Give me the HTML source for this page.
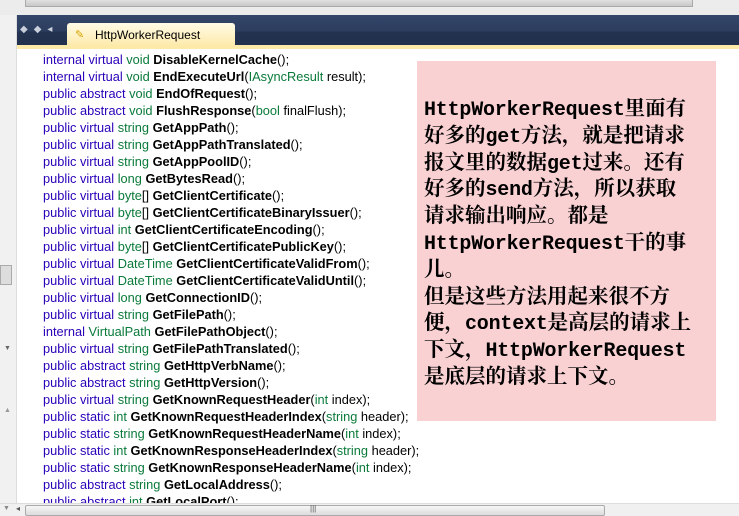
<!DOCTYPE html>
<html><head><meta charset="utf-8"><style>
*{margin:0;padding:0;box-sizing:border-box}
body{width:739px;height:516px;overflow:hidden;background:#fff;position:relative;font-family:"Liberation Sans",sans-serif}
.top{position:absolute;left:0;top:0;width:739px;height:15px;background:#ececec}
.topbar3{position:absolute;left:25px;top:0;width:668px;height:7px;background:linear-gradient(#e0e0e0,#c8c8c8);border:1px solid #aaa;border-top:none}
.hdr{position:absolute;left:17px;top:15px;width:722px;height:30px;background:linear-gradient(#34476a,#2c3d5e 55%,#23324f 56%,#22314d)}
.tab{position:absolute;left:67px;top:23px;width:168px;height:24px;background:linear-gradient(#fffbe6,#fde9a8);border-radius:3px 3px 0 0;font-size:12px;color:#000;padding:5px 0 0 28px}
.strip{position:absolute;left:17px;top:45px;width:722px;height:4px;background:#fde9a8}
.arrows{position:absolute;left:20px;top:24px;color:#c9d0dc;font-size:10px;letter-spacing:6px}
.left{position:absolute;left:0;top:15px;width:17px;height:490px;background:#f1f1f1;border-right:1px solid #ddd}
.code{position:absolute;left:43px;top:51px;font-size:12.8px;line-height:17px;white-space:pre;color:#000}
.k{color:#2a00b8}.t{color:#0a7a3a}b{font-weight:bold}
.hs{position:absolute;left:0;top:503px;width:739px;height:13px;background:#f0f0f0;border-top:1px solid #ddd}
.thumb{position:absolute;left:25px;top:505px;width:580px;height:11px;background:linear-gradient(#f6f6f6,#dcdcdc);border:1px solid #aaa;border-radius:2px}
.pink{position:absolute;left:417px;top:61px;width:299px;height:360px;background:#f9d1d3}
.pt{position:absolute;left:424px;top:93px;font-family:"Noto Serif CJK SC","Noto Sans CJK SC",serif;font-size:20.5px;color:#000;font-weight:bold;white-space:nowrap}
.pt div{height:26.8px;line-height:26.8px;overflow:visible}
.l{font-family:"Liberation Mono",monospace;font-size:20px;letter-spacing:-0.2px;line-height:1}
</style></head><body>
<div class="top"><div class="topbar3"></div></div>
<div class="left"><div style="position:absolute;left:0;top:250px;width:12px;height:20px;background:#ddd;border:1px solid #aaa"></div><div style="position:absolute;left:4px;top:330px;font-size:7px;color:#666">▼</div><div style="position:absolute;left:4px;top:392px;font-size:7px;color:#999">▲</div></div>
<div class="hdr"></div>
<div class="arrows">◆◆◂</div>
<div class="tab"><span style="position:absolute;left:8px;top:5px;color:#d8a400;font-size:11px">✎</span>HttpWorkerRequest</div>
<div class="strip"></div>
<div class="code"><span class="k">internal virtual</span> <span class="t">void</span> <b>DisableKernelCache</b>();
<span class="k">internal virtual</span> <span class="t">void</span> <b>EndExecuteUrl</b>(<span class="t">IAsyncResult</span> result);
<span class="k">public abstract</span> <span class="t">void</span> <b>EndOfRequest</b>();
<span class="k">public abstract</span> <span class="t">void</span> <b>FlushResponse</b>(<span class="t">bool</span> finalFlush);
<span class="k">public virtual</span> <span class="t">string</span> <b>GetAppPath</b>();
<span class="k">public virtual</span> <span class="t">string</span> <b>GetAppPathTranslated</b>();
<span class="k">public virtual</span> <span class="t">string</span> <b>GetAppPoolID</b>();
<span class="k">public virtual</span> <span class="t">long</span> <b>GetBytesRead</b>();
<span class="k">public virtual</span> <span class="t">byte</span>[] <b>GetClientCertificate</b>();
<span class="k">public virtual</span> <span class="t">byte</span>[] <b>GetClientCertificateBinaryIssuer</b>();
<span class="k">public virtual</span> <span class="t">int</span> <b>GetClientCertificateEncoding</b>();
<span class="k">public virtual</span> <span class="t">byte</span>[] <b>GetClientCertificatePublicKey</b>();
<span class="k">public virtual</span> <span class="t">DateTime</span> <b>GetClientCertificateValidFrom</b>();
<span class="k">public virtual</span> <span class="t">DateTime</span> <b>GetClientCertificateValidUntil</b>();
<span class="k">public virtual</span> <span class="t">long</span> <b>GetConnectionID</b>();
<span class="k">public virtual</span> <span class="t">string</span> <b>GetFilePath</b>();
<span class="k">internal</span> <span class="t">VirtualPath</span> <b>GetFilePathObject</b>();
<span class="k">public virtual</span> <span class="t">string</span> <b>GetFilePathTranslated</b>();
<span class="k">public abstract</span> <span class="t">string</span> <b>GetHttpVerbName</b>();
<span class="k">public abstract</span> <span class="t">string</span> <b>GetHttpVersion</b>();
<span class="k">public virtual</span> <span class="t">string</span> <b>GetKnownRequestHeader</b>(<span class="t">int</span> index);
<span class="k">public static</span> <span class="t">int</span> <b>GetKnownRequestHeaderIndex</b>(<span class="t">string</span> header);
<span class="k">public static</span> <span class="t">string</span> <b>GetKnownRequestHeaderName</b>(<span class="t">int</span> index);
<span class="k">public static</span> <span class="t">int</span> <b>GetKnownResponseHeaderIndex</b>(<span class="t">string</span> header);
<span class="k">public static</span> <span class="t">string</span> <b>GetKnownResponseHeaderName</b>(<span class="t">int</span> index);
<span class="k">public abstract</span> <span class="t">string</span> <b>GetLocalAddress</b>();
<span class="k">public abstract</span> <span class="t">int</span> <b>GetLocalPort</b>();</div>
<div class="hs"><span style="position:absolute;left:3px;top:1px;font-size:7px;color:#888">▼</span><span style="position:absolute;left:16px;top:0;font-size:8px;color:#555">◂</span></div>
<div class="thumb"><span style="position:absolute;left:284px;top:-2px;font-size:8px;color:#555">|||</span></div>
<div class="pink"></div>
<div class="pt">
<div><span class="l">HttpWorkerRequest</span>里面有</div>
<div>好多的<span class="l">get</span>方法，就是把请求</div>
<div>报文里的数据<span class="l">get</span>过来。还有</div>
<div>好多的<span class="l">send</span>方法，所以获取</div>
<div>请求输出响应。都是</div>
<div><span class="l">HttpWorkerRequest</span>干的事</div>
<div>儿。</div>
<div>但是这些方法用起来很不方</div>
<div>便，<span class="l">context</span>是高层的请求上</div>
<div>下文，<span class="l">HttpWorkerRequest</span></div>
<div>是底层的请求上下文。</div>
</div>
</body></html>
